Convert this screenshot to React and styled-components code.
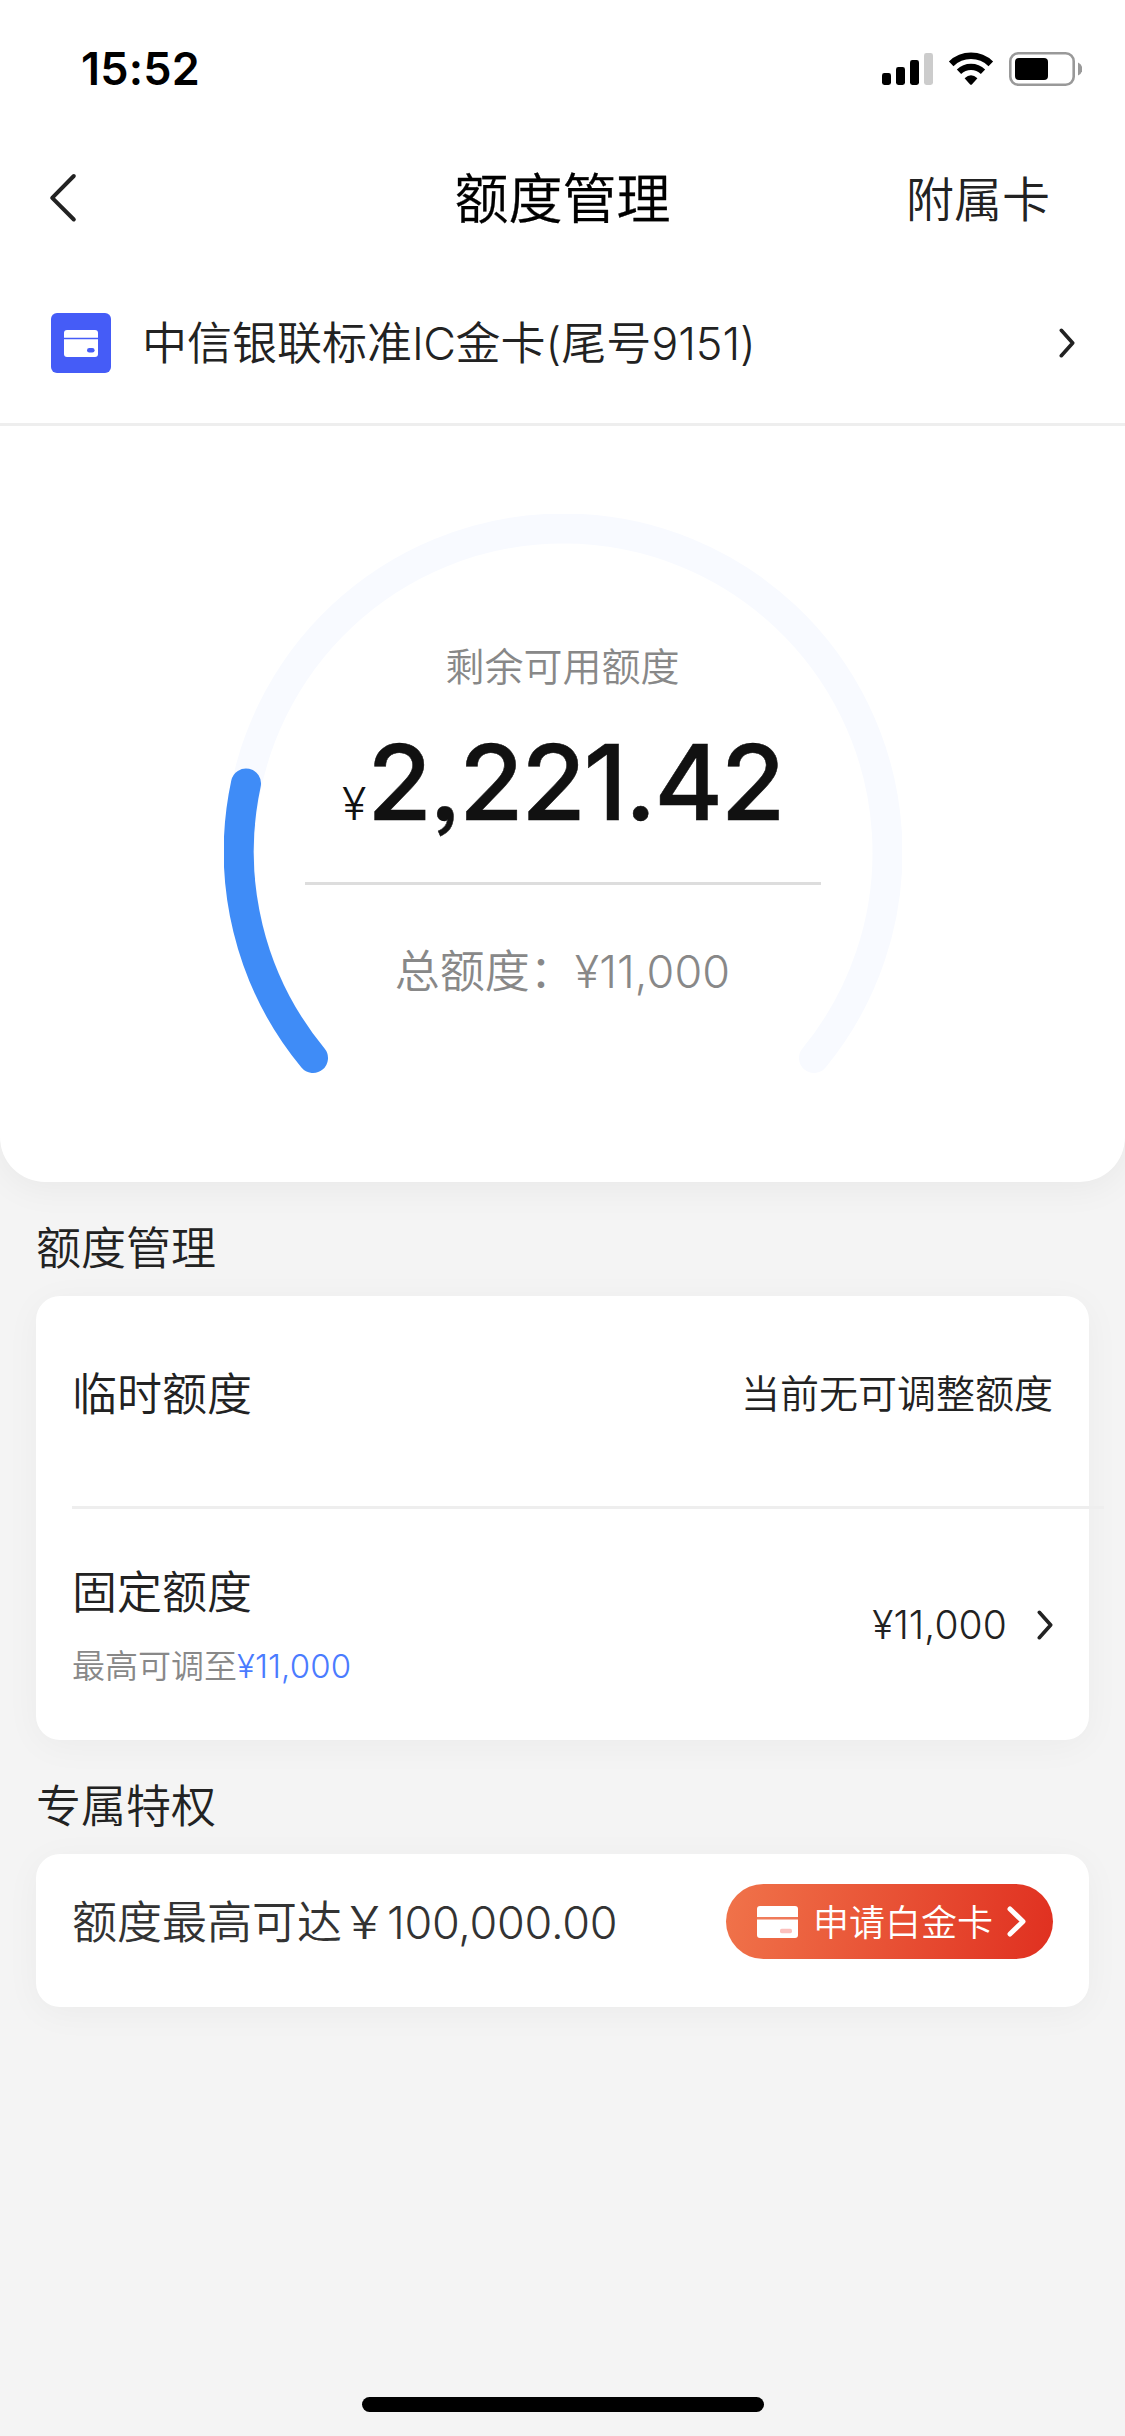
import React from "react";
import styled, { createGlobalStyle } from "styled-components";

const GlobalStyle = createGlobalStyle`
  * { box-sizing: border-box; }
  body {
    margin: 0;
    background: #f4f4f4;
    font-family: Inter, "Noto Sans CJK SC", sans-serif;
    font-weight: 350;
    color: #222;
  }
`;

const Screen = styled.div`
  display: flex;
  flex-direction: column;
  width: 1125px;
  height: 2436px;
  background: #f4f4f4;
  overflow: hidden;
`;

const Panel = styled.section`
  height: 1182px;
  background: #fff;
  border-radius: 0 0 45px 45px;
  box-shadow: 0 6px 36px rgba(0, 0, 0, 0.05);
`;

const StatusBar = styled.header`
  display: flex;
  align-items: flex-start;
  justify-content: space-between;
  height: 132px;
  padding: 52px 43px 0 81px;
`;

const Clock = styled.time`
  font-size: 45px;
  line-height: 34px;
  font-weight: 600;
  color: #000;
  letter-spacing: 0.2px;
`;

const StatusIcons = styled.div`
  display: flex;
  svg { display: block; }
`;

const NavBar = styled.nav`
  display: grid;
  grid-template-columns: 1fr auto 1fr;
  align-items: center;
  height: 132px;
  padding: 0 75px 0 48px;
`;

const NavTitle = styled.h1`
  margin: 4px 0 0 27px;
  font-size: 54px;
  line-height: 60px;
  font-weight: 350;
  color: #000;
  -webkit-text-stroke: 0.3px #000;
`;

const NavAction = styled.span`
  justify-self: end;
  margin-top: 4px;
  font-size: 48px;
  line-height: 60px;
  color: #222;
`;

const CardPicker = styled.div`
  display: flex;
  align-items: center;
  height: 162px;
  padding: 0 50px 2px 51px;
  border-bottom: 3px solid #eee;
`;

const CardName = styled.span`
  flex: 1;
  margin: 3px 0 0 31px;
  font-size: 45px;
  line-height: 60px;
`;

const Tracked = styled.span`
  letter-spacing: ${(p) => p.$by}px;
`;

const Gauge = styled.div`
  display: grid;
  width: 678px;
  height: 600px;
  margin: 88px auto 0;
  justify-items: center;
  > * { grid-area: 1 / 1; }
  > svg { display: block; }
`;

const GaugeBody = styled.div`
  display: flex;
  flex-direction: column;
  align-items: center;
  width: 516px;
  padding-top: 123px;
`;

const GaugeLabel = styled.span`
  font-size: 39px;
  line-height: 60px;
  color: #888;
`;

const Amount = styled.div`
  display: flex;
  align-items: baseline;
  height: 185px;
  padding-top: 22px;
  line-height: 126px;
  color: #111;
  white-space: nowrap;
`;

const Currency = styled.span`
  margin-right: 1px;
  font-size: 45px;
`;

const Figure = styled.strong`
  font-size: 105px;
  font-weight: 500;
  font-feature-settings: "ss03";
  letter-spacing: -2.4px;
  -webkit-text-stroke: 0.5px #111;
`;

const GaugeTotal = styled.div`
  display: flex;
  justify-content: center;
  width: 100%;
  padding-top: 57px;
  border-top: 3px solid #ddd;
  font-size: 45px;
  line-height: 60px;
  color: #888;
  white-space: nowrap;
`;

const SectionTitle = styled.h2`
  margin: ${(p) => p.$top}px 0 0 36px;
  font-size: 45px;
  line-height: 60px;
  font-weight: 350;
`;

const Card = styled.section`
  margin: ${(p) => p.$top}px 36px 0;
  height: ${(p) => p.$height}px;
  padding: 0 36px;
  background: #fff;
  border-radius: 24px;
  box-shadow: 0 6px 36px rgba(0, 0, 0, 0.04);
`;

const LimitRow = styled.div`
  display: flex;
  align-items: center;
  justify-content: space-between;
  height: ${(p) => p.$height}px;
  padding-bottom: ${(p) => p.$lift || 0}px;
`;

const Divider = styled.div`
  height: 3px;
  margin-right: -51px;
  background: #eee;
`;

const LimitName = styled.div`
  padding-top: ${(p) => p.$drop || 0}px;
  font-size: 45px;
  line-height: 60px;
`;

const LimitHint = styled.div`
  margin-top: 13px;
  font-size: 33px;
  line-height: 60px;
  color: #888;
`;

const HintAmount = styled.span`
  color: #4a7bff;
  letter-spacing: ${(p) => p.$by}px;
`;

const LimitValue = styled.div`
  display: flex;
  align-items: center;
  gap: 30px;
  padding-bottom: ${(p) => p.$lift || 0}px;
  font-size: 39px;
  line-height: 60px;
`;

const OfferRow = styled.div`
  display: flex;
  align-items: center;
  justify-content: space-between;
  height: 135px;
`;

const OfferText = styled.div`
  padding-top: 2px;
  font-size: 45px;
  line-height: 60px;
  color: #333;
  white-space: nowrap;
`;

const ApplyButton = styled.button`
  display: flex;
  align-items: center;
  width: 327px;
  height: 75px;
  padding: 0 27px 0 30px;
  border: 0;
  border-radius: 38px;
  background: linear-gradient(100deg, #f0734a 0%, #e03020 100%);
  color: #fff;
  font: 350 36px/60px Inter, "Noto Sans CJK SC", sans-serif;
  white-space: nowrap;
`;

const ApplyLabel = styled.span`
  flex: 1;
  margin: 2px 0 0 15px;
  text-align: left;
`;

const HomeBar = styled.div`
  width: 402px;
  height: 15px;
  margin: auto 0 24px 362px;
  border-radius: 8px;
  background: #000;
`;

function Chevron({ color = "#222", stroke = 3.6, w = 16, h = 30 }) {
  return (
    <svg width={w} height={h} viewBox={`0 0 ${w} ${h}`} fill="none">
      <path
        d={`M${stroke / 2 + 0.5} ${stroke / 2 + 0.5}L${w - stroke / 2 - 0.5} ${h / 2}L${stroke / 2 + 0.5} ${h - stroke / 2 - 0.5}`}
        stroke={color}
        strokeWidth={stroke}
        strokeLinecap="round"
        strokeLinejoin="round"
      />
    </svg>
  );
}

function BackIcon() {
  return (
    <svg width="30" height="50" viewBox="0 0 30 50" fill="none">
      <path d="M25.8 3L4.2 24.8L25.8 46.5" stroke="#222" strokeWidth="4" strokeLinecap="round" strokeLinejoin="round" />
    </svg>
  );
}

function StatusGlyphs() {
  return (
    <svg width="200" height="34" viewBox="882 52 200 34">
      <rect x="882" y="73" width="9" height="12" rx="2.4" />
      <rect x="896" y="67" width="9" height="18" rx="2.4" />
      <rect x="910" y="60" width="9" height="25" rx="2.4" />
      <rect x="924" y="53" width="9" height="32" rx="2.4" fill="#ccc" />
      <path d="M951.2 63.8A28.5 28.5 0 0 1 990.8 63.8" fill="none" stroke="#000" strokeWidth="6.6" />
      <path d="M959 71.8A17.3 17.3 0 0 1 983 71.8" fill="none" stroke="#000" strokeWidth="6.2" />
      <path d="M964.6 78.2Q971 72.2 977.4 78.2L971.9 84.4Q971 85.3 970.1 84.4Z" />
      <rect x="1010.3" y="53.3" width="63.4" height="31.4" rx="8" fill="none" stroke="#999" strokeWidth="2.6" />
      <rect x="1015" y="58" width="33" height="22" rx="4" />
      <path d="M1078 62.5Q1082.3 64.5 1082.3 69T1078 75.5Z" fill="#999" />
    </svg>
  );
}

function BankCardIcon() {
  return (
    <svg width="60" height="60" viewBox="0 0 60 60">
      <rect width="60" height="60" rx="6" fill="#455cf7" />
      <path d="M13 24.8V20Q13 17 16 17H44Q47 17 47 20V24.8Z" fill="#fff" />
      <path d="M13 26.2H47V41Q47 44 44 44H16Q13 44 13 41Z" fill="#fff" />
      <rect x="36" y="35" width="7.6" height="4.6" rx="2.3" fill="#455cf7" />
    </svg>
  );
}

function PlatinumCardIcon() {
  return (
    <svg width="42" height="32" viewBox="0 0 42 32">
      <path d="M1 11V3Q1 0 4 0H39Q42 0 42 3V11Z" fill="#fff" />
      <rect x="1" y="11" width="41" height="2.6" fill="#fff" opacity="0.12" />
      <path d="M1 13.6H42V29Q42 32 39 32H4Q1 32 1 29Z" fill="#fff" />
      <rect x="24" y="22.8" width="12" height="4.4" rx="1.6" fill="#fbc0bd" />
    </svg>
  );
}

function GaugeRing() {
  return (
    <svg width="678" height="600" viewBox="224 514 678 600" fill="none" strokeWidth="30" strokeLinecap="round">
      <path d="M313 1058A324 324 0 1 1 814 1058" stroke="#f8faff" />
      <path d="M313 1058A324 324 0 0 1 246 783.5" stroke="#3f8cf7" />
    </svg>
  );
}

export default function App() {
  return (
    <>
      <GlobalStyle />
      <Screen>
        <Panel>
          <StatusBar>
            <Clock>15:52</Clock>
            <StatusIcons>
              <StatusGlyphs />
            </StatusIcons>
          </StatusBar>
          <NavBar>
            <BackIcon />
            <NavTitle>额度管理</NavTitle>
            <NavAction>附属卡</NavAction>
          </NavBar>
          <CardPicker>
            <BankCardIcon />
            <CardName>
              中信银联标准<Tracked $by={-0.5}>IC</Tracked>金卡(尾号<Tracked $by={-0.1}>9151)</Tracked>
            </CardName>
            <Chevron />
          </CardPicker>
          <Gauge>
            <GaugeRing />
            <GaugeBody>
              <GaugeLabel>剩余可用额度</GaugeLabel>
              <Amount>
                <Currency>¥</Currency>
                <Figure>2,221.42</Figure>
              </Amount>
              <GaugeTotal>
                总额度：<Tracked $by={0.1}>¥11,000</Tracked>
              </GaugeTotal>
            </GaugeBody>
          </Gauge>
        </Panel>

        <SectionTitle $top={37}>额度管理</SectionTitle>
        <Card $top={17} $height={444}>
          <LimitRow $height={210} $lift={12}>
            <LimitName>临时额度</LimitName>
            <LimitValue $lift={2}>当前无可调整额度</LimitValue>
          </LimitRow>
          <Divider />
          <LimitRow $height={231}>
            <div>
              <LimitName $drop={10}>固定额度</LimitName>
              <LimitHint>
                最高可调至<HintAmount $by={0.1}>¥11,000</HintAmount>
              </LimitHint>
            </div>
            <LimitValue>
              <Tracked $by={0.1}>¥11,000</Tracked>
              <Chevron />
            </LimitValue>
          </LimitRow>
        </Card>

        <SectionTitle $top={37}>专属特权</SectionTitle>
        <Card $top={17} $height={153}>
          <OfferRow>
            <OfferText>
              额度最高可达￥<Tracked $by={-0.3}>100,000.00</Tracked>
            </OfferText>
            <ApplyButton>
              <PlatinumCardIcon />
              <ApplyLabel>申请白金卡</ApplyLabel>
              <Chevron color="#fff" stroke={5} w={19} h={31} />
            </ApplyButton>
          </OfferRow>
        </Card>
        <HomeBar />
      </Screen>
    </>
  );
}
